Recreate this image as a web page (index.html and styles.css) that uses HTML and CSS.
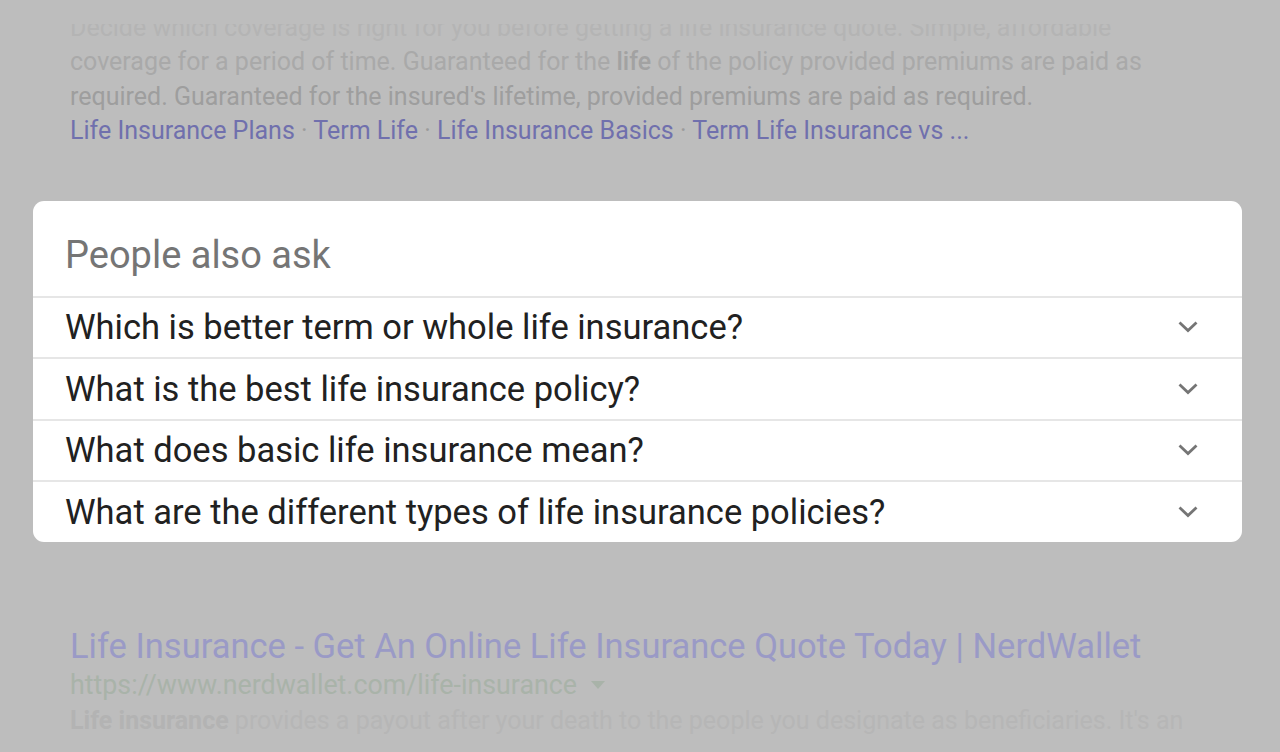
FILE: index.html
```html
<!DOCTYPE html>
<html>
<head>
<meta charset="utf-8">
<link rel="stylesheet" href="styles.css">
</head>
<body>
<div class="screen">
  <div class="above">
    <div class="clip"><p class="line l1">Decide which coverage is right for you before getting a life insurance quote. Simple, affordable</p></div>
    <p class="line l2">coverage for a period of time. Guaranteed for the <b>life</b> of the policy provided premiums are paid as</p>
    <p class="line l3">required. Guaranteed for the insured's lifetime, provided premiums are paid as required.</p>
    <p class="line links"><span>Life Insurance Plans</span> · <span>Term Life</span> · <span>Life Insurance Basics</span> · <span>Term Life Insurance vs ...</span></p>
  </div>

  <section class="card">
    <h2 class="card-title">People also ask</h2>
    <div class="q"><span>Which is better term or whole life insurance?</span><svg class="chev" viewBox="0 0 24 24"><path d="M3.5 7.5 12 15.5 20.5 7.5"/></svg></div>
    <div class="q"><span>What is the best life insurance policy?</span><svg class="chev" viewBox="0 0 24 24"><path d="M3.5 7.5 12 15.5 20.5 7.5"/></svg></div>
    <div class="q"><span>What does basic life insurance mean?</span><svg class="chev" viewBox="0 0 24 24"><path d="M3.5 7.5 12 15.5 20.5 7.5"/></svg></div>
    <div class="q"><span>What are the different types of life insurance policies?</span><svg class="chev" viewBox="0 0 24 24"><path d="M3.5 7.5 12 15.5 20.5 7.5"/></svg></div>
  </section>

  <div class="below">
    <p class="r-title">Life Insurance - Get An Online Life Insurance Quote Today | NerdWallet</p>
    <p class="r-url">https://www.nerdwallet.com/life-insurance <span class="tri"></span></p>
    <p class="r-snip"><b>Life insurance</b> provides a payout after your death to the people you designate as beneficiaries. It's an</p>
  </div>
</div>
</body>
</html>
```
FILE: styles.css
```css
* { box-sizing: border-box; }
html, body { margin: 0; padding: 0; }
body {
  width: 1280px;
  height: 752px;
  overflow: hidden;
  background: #bdbdbd;
  font-family: Roboto, "Noto Sans", "Liberation Sans", sans-serif;
}
.screen {
  display: flex;
  flex-direction: column;
  padding: 0 38px 0 33px;
}
.above {
  padding: 0 37px;
}
.line {
  margin: 0;
  font-size: 25px;
  line-height: 34.5px;
  white-space: nowrap;
}
.clip {
  margin-top: 24px;
  height: 21px;
  overflow: hidden;
  display: flex;
  align-items: flex-end;
}
.l1 { color: #b4b4b4; flex: none; }
.l2 { color: #a9a9a9; }
.l2 b { font-weight: 500; color: #a2a2a2; }
.l3 { color: #9e9e9e; }
.links { color: #9b9b9b; }
.links span { color: #7070ad; }

.card {
  margin-top: 52px;
  background: #fff;
  border-radius: 11px;
  overflow: hidden;
  display: flex;
  flex-direction: column;
}
.card-title {
  margin: 0;
  height: 95px;
  padding: 13px 32px 0;
  display: flex;
  align-items: center;
  font-size: 38px;
  font-weight: 400;
  color: #757575;
}
.q {
  height: 61.5px;
  border-top: 2px solid #e6e6e6;
  padding: 0 32px;
  display: flex;
  align-items: center;
  justify-content: space-between;
  font-size: 34.5px;
  color: #212121;
}
.chev {
  width: 24px;
  height: 24px;
  margin-right: 10px;
  fill: none;
  stroke: #757575;
  stroke-width: 2.8;
}

.below {
  padding: 0 37px;
  margin-top: 84px;
}
.r-title {
  margin: 0;
  font-size: 34.5px;
  line-height: 40px;
  color: #9a9ac6;
  white-space: nowrap;
}
.r-url {
  margin: 0;
  font-size: 26.8px;
  line-height: 38px;
  color: #a9b3a9;
  white-space: nowrap;
  display: flex;
  align-items: center;
}
.tri {
  display: inline-block;
  margin-left: 14px;
  width: 0;
  height: 0;
  border-left: 7px solid transparent;
  border-right: 7px solid transparent;
  border-top: 8px solid #a9b3a9;
}
.r-snip {
  margin: 0;
  font-size: 25px;
  line-height: 34px;
  color: #b6b6b6;
  white-space: nowrap;
}
.r-snip b { font-weight: 700; color: #b3b3b3; }
```
